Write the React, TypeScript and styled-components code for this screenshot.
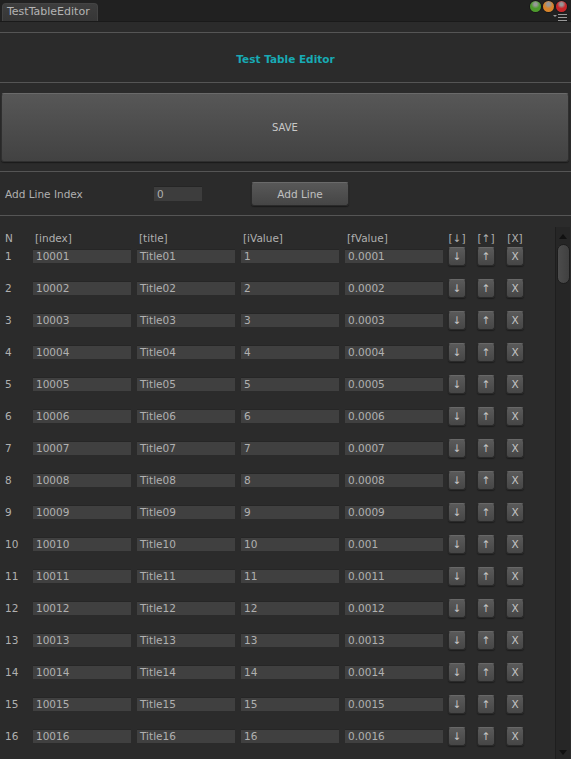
import React from "react";
import styled, { createGlobalStyle } from "styled-components";

const Global = createGlobalStyle`
  html, body { margin: 0; padding: 0; background: #2b2b2b; }
  body { width: 571px; height: 759px; overflow: hidden; font-family: "DejaVu Sans", "Liberation Sans", sans-serif; }
  * { box-sizing: border-box; }
`;

const Window = styled.div`
  width: 571px;
  height: 759px;
  display: flex;
  flex-direction: column;
  background: #2b2b2b;
  color: #b0b0b0;
  font-size: 10.5px;
  overflow: hidden;
`;

const TabBar = styled.div`
  height: 22px;
  flex: none;
  background: #212121;
  border-bottom: 1px solid #1a1a1a;
  display: flex;
  align-items: flex-end;
  padding-left: 2px;
  position: relative;
`;

const Tab = styled.div`
  width: 96px;
  height: 18px;
  background: linear-gradient(#3e3e3e, #363636);
  border: 1px solid #444;
  border-bottom: none;
  border-radius: 4px 4px 0 0;
  color: #b4b4b4;
  font-size: 11px;
  line-height: 16px;
  padding-left: 4px;
`;

const WinButtons = styled.div`
  position: absolute;
  right: 4px;
  top: 1px;
  display: flex;
  gap: 2px;
`;

const Dot = styled.div<{ $c: string }>`
  width: 11px;
  height: 11px;
  border-radius: 50%;
  background: radial-gradient(circle at 50% 30%, #fff8 0 15%, ${(p) => p.$c} 45%);
  box-shadow: 0 0 0 1px #0004;
`;

const MenuIcon = styled.svg`
  position: absolute;
  right: 4px;
  top: 14px;
`;

const Divider = styled.div`
  height: 1px;
  flex: none;
  background: #555;
`;

const Spacer = styled.div<{ $h: number }>`
  height: ${(p) => p.$h}px;
  flex: none;
`;

const TitleBox = styled.div`
  height: 49px;
  flex: none;
  display: flex;
  align-items: center;
  justify-content: center;
  color: #18aab4;
  font-weight: bold;
  font-size: 10.5px;
  padding-top: 2px;
`;

const SaveButton = styled.button`
  flex: none;
  margin: 10px 2px 9px 1px;
  height: 69px;
  border: 1px solid #2f2f2f;
  border-top-color: #6a6a6a;
  border-radius: 3px;
  background: linear-gradient(#575757, #424242);
  color: #c8c8c8;
  font-family: inherit;
  font-size: 10px;
  box-shadow: 0 1px 1px #1a1a1a;
`;

const AddRow = styled.div`
  height: 43px;
  flex: none;
  display: flex;
  align-items: center;
  padding-left: 5px;
`;

const Label = styled.div`
  width: 149px;
`;

const SmallInput = styled.div`
  width: 48px;
  height: 15px;
  background: #3d3d3d;
  border-top: 1px solid #252525;
  color: #b0b0b0;
  padding-left: 3px;
  line-height: 14px;
  margin-right: 49px;
`;

const AddButton = styled.button`
  width: 98px;
  height: 24px;
  border: 1px solid #2a2a2a;
  border-top-color: #6a6a6a;
  border-radius: 3px;
  background: linear-gradient(#585858, #454545);
  color: #c0c0c0;
  font-family: inherit;
  font-size: 10.5px;
  box-shadow: 0 1px 1px #1a1a1a;
`;

const TableArea = styled.div`
  flex: 1;
  display: flex;
  min-height: 0;
`;

const TableBody = styled.div`
  flex: 1;
  padding-top: 15px;
  overflow: hidden;
  display: flex;
  flex-direction: column;
  gap: 10px;
`;

const Row = styled.div<{ $header?: boolean }>`
  display: flex;
  align-items: center;
  height: ${(p) => (p.$header ? 14 : 22)}px;
  margin-bottom: ${(p) => (p.$header ? -10 : 0)}px;
  flex: none;
`;

const NCell = styled.div`
  width: 33px;
  padding-left: 5px;
`;

const HeadCell = styled.div`
  width: 98px;
  margin-right: 6px;
  padding-left: 2px;
`;

const HeadBtn = styled.div<{ $gap: number }>`
  width: 18px;
  margin-left: ${(p) => p.$gap}px;
  text-align: center;
`;

const Field = styled.div`
  width: 98px;
  height: 14px;
  margin-right: 6px;
  background: #404040;
  border-top: 1px solid #262626;
  padding-left: 3px;
  line-height: 13px;
  color: #b0b0b0;
  white-space: nowrap;
  overflow: hidden;
`;

const SmallBtn = styled.button<{ $gap: number }>`
  width: 18px;
  height: 19px;
  margin-left: ${(p) => p.$gap}px;
  padding: 0;
  border: 1px solid #2a2a2a;
  border-top-color: #686868;
  border-radius: 3px;
  background: linear-gradient(#5a5a5a, #464646);
  color: #c4c4c4;
  font-family: inherit;
  font-size: 10.5px;
  line-height: 17px;
  box-shadow: 0 1px 1px #1c1c1c;
`;

const Scrollbar = styled.div`
  width: 15px;
  margin: 11px 1px 0 0;
  background: #262626;
  border-left: 1px solid #1e1e1e;
  display: flex;
  flex-direction: column;
  align-items: center;
`;

const Arrow = styled.div<{ $down?: boolean }>`
  width: 0;
  height: 0;
  border-left: 4px solid transparent;
  border-right: 4px solid transparent;
  ${(p) => (p.$down ? "border-top: 5px solid #111;" : "border-bottom: 5px solid #111;")}
  margin-top: ${(p) => (p.$down ? "auto" : "7px")};
  margin-bottom: ${(p) => (p.$down ? "4px" : "0")};
`;

const Thumb = styled.div`
  width: 13px;
  height: 40px;
  margin-top: 5px;
  border-radius: 7px;
  background: linear-gradient(90deg, #4c4c4c, #404040);
  border: 1px solid #1d1d1d;
`;

const rows = Array.from({ length: 16 }, (_, i) => {
  const n = i + 1;
  const pad = n < 10 ? `0${n}` : `${n}`;
  const f = parseFloat((n * 0.0001).toFixed(4)).toString();
  return { n, index: `100${pad}`, title: `Title${pad}`, iv: `${n}`, fv: f };
});

export default function App() {
  return (
    <>
      <Global />
      <Window>
        <TabBar>
          <Tab>TestTableEditor</Tab>
          <WinButtons>
            <Dot $c="#4d9a2c" />
            <Dot $c="#d8842a" />
            <Dot $c="#c8262a" />
          </WinButtons>
          <MenuIcon width="14" height="7" viewBox="0 0 14 7">
            <path d="M0 1h4L2 3z" fill="#999" />
            <rect x="5" y="0" width="9" height="1" fill="#999" />
            <rect x="5" y="3" width="9" height="1" fill="#999" />
            <rect x="5" y="6" width="9" height="1" fill="#999" />
          </MenuIcon>
        </TabBar>
        <Spacer $h={10} />
        <Divider />
        <TitleBox>Test Table Editor</TitleBox>
        <Divider />
        <SaveButton>SAVE</SaveButton>
        <Divider />
        <AddRow>
          <Label>Add Line Index</Label>
          <SmallInput>0</SmallInput>
          <AddButton>Add Line</AddButton>
        </AddRow>
        <Divider />
        <TableArea>
          <TableBody>
            <Row $header>
              <NCell>N</NCell>
              <HeadCell>[index]</HeadCell>
              <HeadCell>[title]</HeadCell>
              <HeadCell>[iValue]</HeadCell>
              <HeadCell>[fValue]</HeadCell>
              <HeadBtn $gap={-1}>[↓]</HeadBtn>
              <HeadBtn $gap={11}>[↑]</HeadBtn>
              <HeadBtn $gap={11}>[X]</HeadBtn>
            </Row>
            {rows.map((r) => (
              <Row key={r.n}>
                <NCell>{r.n}</NCell>
                <Field>{r.index}</Field>
                <Field>{r.title}</Field>
                <Field>{r.iv}</Field>
                <Field>{r.fv}</Field>
                <SmallBtn $gap={-1}>↓</SmallBtn>
                <SmallBtn $gap={11}>↑</SmallBtn>
                <SmallBtn $gap={11}>X</SmallBtn>
              </Row>
            ))}
          </TableBody>
          <Scrollbar>
            <Arrow />
            <Thumb />
            <Arrow $down />
          </Scrollbar>
        </TableArea>
      </Window>
    </>
  );
}
